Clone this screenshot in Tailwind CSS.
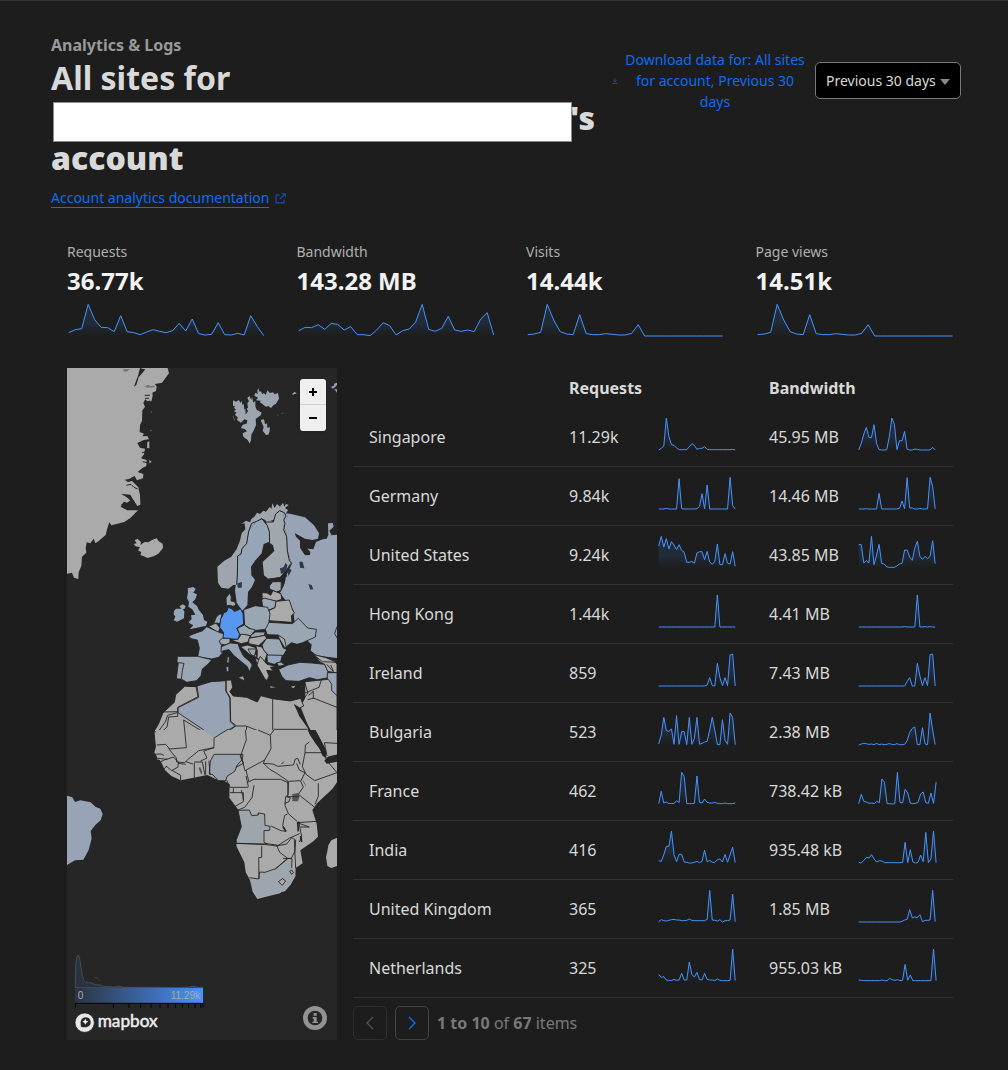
<!DOCTYPE html>
<html lang="en">
<head>
<meta charset="utf-8">
<title>Account analytics</title>
<script src="https://cdn.jsdelivr.net/npm/@tailwindcss/browser@4"></script>
</head>
<body class="bg-[#1d1d1d] text-[#d9d9d9] font-['Noto_Sans',sans-serif] w-[1008px] h-[1070px] overflow-hidden">
<main class="h-full border-t border-[#313131] px-[51px] pt-[34px]">

<header class="flex h-[196px]">
  <div class="w-[560px] shrink-0">
    <p class="text-base leading-[21px] font-bold text-[#999999]">Analytics &amp; Logs</p>
    <h1 class="mt-[2px] text-[32px] leading-10 font-bold">All sites for
      <span class="flex h-10 items-center font-black"><span class="mt-[7px] ml-[2px] block h-10 w-[519px] shrink-0 border border-[#8a8a8a] bg-white"></span><span class="-ml-[2px]">'s</span></span>
      <span class="block font-black">account</span>
    </h1>
    <a class="mt-[10px] flex items-center gap-[6px] text-sm leading-5 text-[#0f6bf2]"><span class="border-b border-[#0f6bf2] leading-[19px]">Account analytics documentation</span>
      <svg class="h-[11px] w-[11px]" viewBox="0 0 12 12" fill="none" stroke="#1353b5" stroke-width="1.2"><path d="M5 2.2H1.2v8.6h8.6V7M7.2.8h4v4M11 1 5.2 6.8"/></svg>
    </a>
  </div>
  <div class="flex w-[350px] shrink-0 pt-[14px]">
    <a class="flex h-[63px] w-[204px] items-center text-center text-sm leading-[21px] text-[#0f6bf2]">
      <svg class="mr-[5px] ml-px h-[6px] w-[6px] shrink-0" viewBox="0 0 6 6" fill="none" stroke="#1353b5" stroke-width=".8"><path d="M3 0v4M1.2 2.3 3 4.1l1.8-1.8M.2 5.5h5.6"/></svg>
      <span class="w-[184px]">Download data for: All sites for account, Previous 30 days</span>
    </a>
    <button class="mt-[13px] flex h-[37px] w-[146px] items-center rounded-[5px] border border-[#797979] bg-black pl-[10px] text-sm whitespace-nowrap">Previous 30 days<svg class="mt-0.5 ml-1 h-[6px] w-[10px]" viewBox="0 0 10 6"><path d="M0 0h10L5 6z" fill="#888"/></svg></button>
  </div>
</header>

<section class="grid h-[137px] w-[918px] grid-cols-4 pt-[10px]">
  <div class="px-4"><p class="text-sm leading-[21px] text-[#b0b0b0]">Requests</p><p class="mt-[4px] text-2xl leading-[30px] font-bold text-[#f2f2f2]">36.77k</p><svg class="mt-[5px] h-10 w-[198px]" data-step="6.5" data-h="10,19,22,95,49,26,25,13,61,13,10,4,12,19,14,10,16,38,15,51,7,3,5,40,4,3,8,3,61,29,1"></svg></div>
  <div class="px-4"><p class="text-sm leading-[21px] text-[#b0b0b0]">Bandwidth</p><p class="mt-[4px] text-2xl leading-[30px] font-bold text-[#f2f2f2]">143.28 MB</p><svg class="mt-[5px] h-10 w-[198px]" data-step="6.5" data-h="16,26,25,34,20,38,35,18,28,4,4,1,18,40,31,3,16,21,42,95,20,14,23,59,18,14,18,13,51,70,3"></svg></div>
  <div class="px-4"><p class="text-sm leading-[21px] text-[#b0b0b0]">Visits</p><p class="mt-[4px] text-2xl leading-[30px] font-bold text-[#f2f2f2]">14.44k</p><svg class="mt-[5px] h-10 w-[198px]" data-step="6.5" data-h="4,6,11,95,48,13,6,4,64,7,4,4,7,5,3,3,8,34,0,0,0,0,0,0,0,0,0,0,0,0,0"></svg></div>
  <div class="px-4"><p class="text-sm leading-[21px] text-[#b0b0b0]">Page views</p><p class="mt-[4px] text-2xl leading-[30px] font-bold text-[#f2f2f2]">14.51k</p><svg class="mt-[5px] h-10 w-[198px]" data-step="6.5" data-h="4,6,11,95,48,13,6,4,64,7,4,4,7,5,3,3,8,34,0,0,0,0,0,0,0,0,0,0,0,0,0"></svg></div>
</section>

<section class="flex gap-4 pl-4">
<div class="relative h-[672px] w-[270px] shrink-0 overflow-hidden bg-[#262626]">
<svg class="block h-[672px] w-[270px]" viewBox="0 0 810 2016" stroke-linejoin="round">
  <!-- Arctic and Scandinavia -->
  <g transform="translate(-21 -24)">
    <path fill="#aaa" d="M21 24H323L327 40 316 55 306 68 285 72 290 80 288 93 277 98 278 107 275 121 262 124 256 118 250 128 255 141 247 151 246 182 240 196 239 216 252 221 247 229 262 228 267 238 251 240 232 249 240 263 255 266 252 283 243 295 260 300 259 318 247 324 233 336 250 342 249 355 231 361 224 348 207 357 194 359 204 366 216 363 235 382 240 406 241 434 232 438 217 415 211 404 183 401 199 411 211 421 202 428 191 425 182 440 202 451 234 451 211 474 193 486 154 496 148 487 142 505 137 525 116 543 106 550 101 536 91 550 80 547 77 565 79 578 66 590 64 618 56 637 55 657 42 653 36 638 21 641z"/>
    <path fill="#262626" d="M240 24 250 27 256 28 249 37 236 52 229 75 222 80 228 63 234 48z"/>
    <path fill="#777" d="M190 27h20l-11 8-8-1zM252 80l13-6 6 4 15-1-3 5-19 1z"/>
    <g fill="none" stroke="#262626" stroke-width="3"><path d="M254 106h16M255 115h12M246 165l12-5M240 210l17-5 8 4M246 277l14 0M248 305l15 3M199 376l14-3 9 9 11 5M184 434l13-3 7 10M205 439l23-6"/></g>
    <path fill="#aaa" d="m269 121 6-1-2 5zM272 155l3-1-1 4zM272 209l3 1-3 5zM262 246l6-2 0 21-7-1zM268 299l7 7-7 4z"/>
    <path fill="#aaa" d="M221 552 230 550 224 540 233 537 243 546 241 555 254 546 265 547 276 540 290 535 296 544 308 551 309 564 295 581 281 589 262 594 250 588 241 585 244 577 234 571 240 562 227 559z"/>
    <path fill="#9da5af" d="M519 121 528 125 537 120 541 129 545 122 547 136 551 131 553 149 556 146 557 164 564 153 560 146 564 143 562 130 567 124 562 114 568 108 574 120 576 110 580 128 586 122 586 139 590 149 605 158 602 166 594 172 587 177 588 196 580 214 574 224 573 240 569 251 563 240 558 236 550 230 548 220 561 214 554 207 543 204 548 194 560 191 562 181 553 178 543 188 531 180 533 172 525 165 529 157 521 154 528 149 522 143 525 139 519 137zM583 107 586 98 593 102 592 92 595 85 599 96 603 94 607 103 611 99 617 104 623 91 629 99 640 97 643 103 654 99 657 116 648 131 640 136 633 144 625 138 618 140 610 134 600 127 602 122 588 121 594 113zM602 180 612 178 615 193 621 190 622 203 630 202 629 214 625 224 618 225 608 212 611 201z"/>
    <path fill="#aaa" d="m696 102 8-6 6 4-12 4z"/><path fill="#98a4b5" d="m813 80 9-3 0-6 9-3v7l-8 8-5 3zM823 88l8 0v10z"/>
    <path fill="none" d="M519 168l5 14M651 165h4M665 160h5" stroke="#777" stroke-width="2"/>
    <!-- Norway -->
    <path fill="#9ea5ad" d="M686 435 675 444 684 450 674 468 661 452 650 460 645 478 628 484 606 476 590 484 575 500 566 514 560 550 546 566 543 582 533 588 532 645 530 674 520 675 505 686 484 683 474 668 472 620 493 602 514 590 530 567 540 542 545 520 556 508 554 490 544 492 558 482 570 487 574 477 583 470 591 458 600 462 610 452 618 455 630 440 634 448 637 430 644 444 651 432 660 440 669 428 673 440 678 432z"/>
    <!-- Sweden -->
    <path fill="#96a5b8" d="M606 476 622 497 628 515 628 545 611 552 605 580 585 602 573 620 574 646 585 659 576 680 564 696 562 736 547 752 530 728 525 690 532 645 533 588 543 582 546 566 560 550 566 514 575 500 590 484z"/>
    <!-- Finland -->
    <path fill="#a0a7ad" d="M614 475 640 485 645 464 656 452 670 456 673 480 671 500 680 520 681 566 689 590 694 606 678 630 660 651 625 657 612 646 608 606 625 590 643 573 639 556 629 548 628 515 622 497z"/>
    <!-- Russia -->
    <path fill="#98a4b5" d="M670 460 690 461 735 472 762 496 777 520 774 536 757 540 735 536 704 519 708 530 720 542 720 563 735 586 750 585 751 575 742 566 760 568 768 546 788 538 800 536 805 525 804 490 818 489 821 500 808 512 815 526 831 524V890L800 882 750 850 705 800 700 750 660 700 672 680 678 650 694 606 689 590 681 566 680 520 671 500z"/>
    <path fill="#262626" d="m615 657 45-5 18-9 4 6-22 12-32 6-10 16-4-12z"/>
    <g fill="#2d3a4d"><path d="m660 625 10-3 7-13 5 6-4 21-15 6zM681 631l10-4 16 15-3 14-16 0zM718 605l10 0 9 35-9 2-7-12zM745 672l10 5 5 13-10 0zM532 670l14-4-1 17-12 0z"/></g>
    <g fill="none" stroke="#222" stroke-width="3"><path d="M530 674 532 645 533 588 543 582 546 566 560 550 566 514 575 490 590 484 606 476 622 497 628 515 629 548M606 476l10 10 24 0 7-24 12-10 14 6 5 10-7 12 4 10-4 20 9 20 2 42 6 30 7 8-11 23-21 20"/></g>
  </g>

  <!-- Europe and North Africa -->
  <g transform="translate(-21 576)" stroke="#222" stroke-width="2.6">
    <path fill="#98a4b5" stroke="none" d="M660 100 700 20 831 40V294L800 290 770 286 752 272 756 248 768 214 705 150 700 125z"/>
    <path stroke="none" fill="#2d3a4d" d="m745 72 10 3 5 13-9 1z"/>
    <path stroke="none" fill="#96a5b8" d="m358 139 10-6 9 5-3 8-7 3zM342 153l6-7 17 0 8 7-1 22-21 10-10-4 5-11-5-8zM383 85l17-4 7 6-7 11 11 5-5 15-9 9 14 11 5 11 13 16 3 15 10 5-4 12-20 5-29 6 11-12-9-5-5-5 9-9-2-11 13-2-9-16-12-8 2-13-6-13 3-19z"/>
    <!-- Denmark and Baltic states -->
    <path fill="#9ea5ad" d="m498 113 12-14 4 12-1 12 11 2 4 11-10 3-7-3-12 1z"/>
    <path fill="#9ea5ad" d="m628 78 10-13 26 0-1 26-14 5-20-9z"/><path fill="#aaa" d="m606 98 16 1 10 7 7-14 24 9 2 17-17 6-36-8-5 7z"/>
    <path fill="#9aa6b1" d="m605 120 7-6 36 9-3 20-24 9-13-13z"/>
    <path fill="#aaa" d="m648 124 40-4 10 31 6 8-10 8 2 20-70-5 0-30 19-9z"/>
    <path fill="#9aa6b1" d="m551 149 35-12 37 5 7 20-3 22 0 23-47 5-26-17z"/>
    <path fill="#96a5b8" d="m469 171 9-8 8-1-4 18-1 11-12-2-9 5z"/><path fill="#a0a7ad" d="m446 199 22-10 12 15-5 14z"/>
    <path fill="#96a5b8" d="M386 228 400 222 428 212 440 200 475 216 492 222 489 242 484 259 488 278 476 292 455 297 413 290 418 265 412 240 393 236z"/>
    <path fill="#9aa6b1" d="m352 289 60 0 43 10-8 11-20 17-4 20-13 15-30 5-13-8-14-4-3-10 8-28-7-13z"/>
    <path fill="#9ea5ad" d="m355 308 17 2-5 22-3 26-15-2z"/>
    <!-- Central Europe, the Balkans and the Black Sea coast -->
    <path fill="#5797f0" d="M492 158 500 155 505 142 518 148 522 154 533 151 541 146 549 160 551 192 530 205 539 222 534 238 507 236 489 234 491 218 479 202 482 178z"/>
    <path fill="#9aa6b1" d="m532 205 21-10 14 10 19 5-14 17-33-4z"/>
    <path fill="#a0a7ad" d="m478 242 10-7 22 0 0 14-15 6-14-3z"/><path fill="#aaa" d="m512 240 22-2 10-16 27 5-7 19-20 5z"/>
    <path fill="#9ea5ad" d="m572 226 15-10 29 0-4 11-39 6z"/><path fill="#aaa" d="m567 235 48-9 5 9-24 22-30-6z"/>
    <path fill="#98a4b5" d="m484 260 27-11 23 2 5 15 12 23 19 16 7 10-9 21-6-16-18-15-23-19-14-17-17 3-7 5z"/>
    <path fill="#98a4b5" d="m533 353 17-6 5 16zM498 320l8-1 1 16-8 0zM502 290l6 0-1 19-7 0z"/>
    <path fill="#aaa" d="m541 260 22-5 25 8-3 16 7 14-24-10-13-12z"/>
    <path fill="#9aa6b1" d="m564 267 25 0-6 21-10-4z"/><path fill="#aaa" d="m587 257 19 4 15 22-7 22-23-8 1-24zM587 294l18 5-3 16-14-10z"/>
    <path fill="#aaa" d="m595 302 6-13 20 24 28 6-18 3 9 11-20-2 7 16-6 15-8-8-13-23-9-16z"/>
    <path fill="#9aa6b1" d="m606 255 14-20 38 2 12 27 11 5-11 18-45-1-14-16z"/>
    <path fill="#94a6bd" d="m621 285 46 1-5 20-20 7-20-6z"/><path fill="#aaa" d="m654 229 16-4 13 33-9 5-10-17z"/>
    <path fill="#9aa6b1" d="m616 208 11-21 70 4 18-16 28 29 26 4-3 23-38 17-17 5-17-5-15 12-6-23-19-12-33-1z"/>
    <path fill="#262626" stroke="none" d="m666 292 15-26 12-18 14 5-1 15 20 3 20-7 14 20 24 22-18 8-34 2-43-3-14 4-13-5z"/>
    <path fill="#98a4b5" d="M656 328l28-13 36-8 35 2 39 4 10 20 0 20-31 6-25-6-31 11-39-2-13-13z"/>
    <path fill="#96a5b8" d="m650 308 13-2 12 9-19 4z"/>
    <path fill="#aaa" d="m763 284 35 9 25 11 8 8v27l-28-5-9-21-14-7z"/><path fill="#98a4b5" d="m802 338 29 0v70l-17-10-12-25z"/>
    <g fill="none"><path d="m767 289 20 16 44 2M800 313l23 25M812 315l8 18M831 200l-7 20 7 14"/></g>
    <!-- Maghreb, Egypt and the Levant -->
    <path fill="#aaa" d="m735 365 70-7 10 15 0 19 16 15V600H770L760 540 720 440 734 415z"/>
    <path fill="#aaa" d="M347 404 375 378 411 380 496 361 514 360 518 382 510 395 520 408 560 412 592 426 602 407 637 416 690 423 722 415 731 438 719 444 703 434 722 462 747 505 765 550 780 600H290L282 514 295 493 309 458 343 427z"/>
    <path fill="#aaa" stroke="none" d="m630 379 18 3-16 1zM692 380l14-3-5 8z"/>
    <path fill="#98a4b5" d="m411 378 42-13 45-3 0 32 12 21 1 70 14 14-61 33-110-74 0-15 62-31z"/>
    <path fill="#262626" stroke="none" d="m703 434 10 10 9 16 13 21 23 40 11 10 8 20-22-5-12-42-25-35z"/>
    <g fill="none"><path d="m375 378 33 2 6 30-61 32v27l-27 2-5 30-15 14h-24M296 513l20-27 7-20 28-8M309 456l44-1M371 480l6 60M371 480l98 60M498 362v30l12 20 2 72 18 14 28 0 73 29M528 497l-26 20M560 500l-4 45M638 417v121M641 508h102M631 528v20M510 395l12 14M733 364l11 35-15 20M732 400l45-18 8-25M760 394l0 20 71 28M760 394l-14 12M743 419l20-5"/></g>
  </g>

  <!-- Sub-Saharan Africa and Brazil -->
  <g transform="translate(-21 1086)" stroke="#222" stroke-width="2.6">
    <path fill="#98a4b5" stroke="none" d="M21 197 37 202 45 216 61 211 92 217 107 231 121 236 128 252 122 271 106 285 92 303 95 325 86 360 70 389 45 391 21 405z"/>
    <path fill="#aaa" stroke="none" d="M287 0H742L748 13 773 39 793 72 799 100 831 92V157L817 177 771 220 757 240 770 281 774 320 760 334 721 361 728 400 707 414 706 436 683 470 660 490 630 497 592 507 578 485 570 450 557 427 553 397 530 350 528 337 545 290 538 244 508 203 509 163 490 151 468 148 442 135 362 151 334 138 314 119 303 95 283 68 290 42z"/>
    <path fill="#262626" stroke="none" d="m745 0 22 0 35 67-10 12-7-14-21-28z"/><path fill="#262626" stroke="none" d="m793 92 13-15 25-6v24l-31 6z"/>
    <path fill="#aaa" stroke="none" d="m767 0 66 0v73l-32 7-8-42z"/><path fill="none" d="m831 40-38-2 8 40"/>
    <path fill="#262626" stroke="none" d="m743 0 15 0 20 32 16 32 6 20-12-6-12-28-22-28z"/>
    <path fill="#98a4b5" stroke="none" d="m428 0h70l-36 24z"/>
    <path fill="#9aa3ad" d="m462 73 87 0-2 15-15 17-8 19-23 15-4 13-22 0-17-18-10-2 3-39z"/>
    <path fill="#9da5ad" d="m534 241 34-1 7 17 20-2-1-6 20 3 1 34 15 3-1 12-17 1 0 35 9 5-92-2 0-11 15-39z"/>
    <path fill="#9da5ad" stroke="none" d="m568 443 28 4 3-21 16 1 32-11 37-31 12 1-1 28 12 23-15 27-17 20-31 7-50 14-12-22z"/>
    <path fill="none" d="m568 443 28 4 3-21 16 1 32-11 37-31 12 1-1 28"/>
    <path fill="#aaa" d="m655 455 13-9 9 7-10 13zM689 424l6-4 5 8-5 5z"/>
    <path fill="#aaa" stroke="none" d="m831 323-17 8-9 15-3 18-4 18 4 26 12 6 17-6z"/>
    <path fill="#555" stroke="none" d="m697 192 17-3 5 8-5 17-17 0z"/>
    <g fill="none"><path d="m374 0 5 53-50 4-12-14-27 2M462 24v29l-46 9-32 26-10 10-24-2-1-12-23-28M462 24l42-26M462 53l-31 10 10 21-20 10M556 0l3 29-18 51 10 19-24 14M594 0l37 16 2 40-19 34-59 32-13-47M558 120l8 33M562 157l20-9 79 0 24 10M642 0l-11 15M614 90l-4 10 29 2 14 7 47-4 6-18 7-2 8 18M611 100l18 18 18 10 38 26 36-2M710 100l8 20 17 8-14 28M735 68l52 0M735 68l-8 42 12 24 25 18 67-24M775 160v39l-10 24M735 68l1-23 12-9M787 68l17 28 27 32M723 156l7 15-15 22 48 38M683 155l1 40-7 5-2 26 10 25 26 23M680 200l36 0M711 278l60-4M711 278l37 13-27 0M716 274l9 46-7 16M683 252l-9 4-6 31 10 17-15-2-30-14M615 340l40 6 34-22 30-13M528 340l92 4 30 4 30-6 15-19 12 7-2 33-11 22-25 1M605 347v35l-9 1 1 64M650 346l9 21 24 18-37 32M508 172h57M510 188h40v27l-26 15M520 175v13M544 180l7 30M582 166l-6 37-22 29-20 8M500 150l9 20M565 170l-7-32"/><path d="m283 73 20-1 9 4M285 84l36 4 18-7 16 14-1 16-19 11-17-14M336 121l26 15 0 14M354 100l23 3M377 95l22 7M403 98l0 45M403 96l24 0 8 40M437 94l0 40M447 92l3 43M320 108l-10 12M302 95l20-9M679 200l12 3-5 13-13 4M686 156l-2 40M665 102l6-7M703 330l4 85"/></g>
    <path d="m416 113 5-1 6 14-3 8-6-14z" fill="#555" stroke="none"/>
    <path d="m728 150 9 17" stroke="#666"/><path d="m713 276 2 28M669 290l9 14M722 318l3 18" fill="none" stroke-width="5"/>
  </g>

  <!-- Distribution curve, scale and wordmark -->
  <defs><linearGradient id="scale"><stop stop-color="#2b3441"/><stop offset="1" stop-color="#4992fd"/></linearGradient></defs>
  <g transform="translate(-21 1716)">
    <path fill="#29323f" stroke="#555d68" stroke-width="2" d="M46 143V105C47 80 49 45 54 45c6 0 8 42 15 68 4 14 7 15 18 15s13 5 22 6 15-1 21 6h15c6-3 8-1 12 1 10 1 15-5 24-2l10 3H375c14 0 16-5 30-2l14 3 9-2v3z"/>
    <path d="M105 113q8-4 14 10" fill="none" stroke="#555" stroke-width="2"/>
    <path fill="url(#scale)" d="M45 144h384v45H45z"/>
    <path fill="none" stroke="#050505" stroke-width="3" d="M46 203v-13h383v13M160 190v14M207 190v14M242 190v14M273 190v14M300 190v14M324 190v14M347 190v14M367 190v14M386 190v14M405 190v14M422 190v14"/>
    <g font-family="Liberation Sans, Arial, sans-serif" font-size="30" fill="#aaa"><text x="53" y="177">0</text><text x="420" y="177" text-anchor="end">11.29k</text></g>
    <circle cx="74" cy="248" r="29" fill="#e8e8e8" stroke="#191919" stroke-width="2"/>
    <path d="M63 260c-2-10-2-20 5-25 7-6 17-4 21 2 5 7 4 17-2 21-7 5-16 4-24 2z" fill="#262626"/><path d="m76 236 3 6 6 3-6 3-3 6-3-6-6-3 6-3z" fill="#eee"/>
    <text x="113" y="260" textLength="180" lengthAdjust="spacingAndGlyphs" font-family="Lato, sans-serif" font-weight="400" font-size="49" fill="#eee" stroke="#eee" stroke-width="1.4">mapbox</text>
    <circle cx="765" cy="234" r="29" fill="#262626" stroke="#929292" stroke-width="14"/><path d="M761 219h9v8h-9zM758 231h12v14h4v4h-17v-4h4v-9h-3z" fill="#929292"/>
  </g>
</svg>
<div class="absolute top-[11px] right-[11px] flex h-[52px] w-[26px] flex-col rounded-[3px] bg-[#efefef] shadow">
  <button class="flex h-[26px] items-center justify-center border-b border-[#d0d0d0]"><svg class="h-2 w-2" viewBox="0 0 8 8" stroke="#000" stroke-width="2"><path d="M4 0v8M0 4h8"/></svg></button>
  <button class="flex h-[26px] items-center justify-center"><svg class="h-2 w-2" viewBox="0 0 8 8" stroke="#000" stroke-width="2"><path d="M0 4h8"/></svg></button>
</div>
</div>

<div class="w-[600px] shrink-0">
  <div class="grid h-10 grid-cols-3 items-center font-bold"><span></span><span class="pl-4">Requests</span><span class="pl-4">Bandwidth</span></div>
  <div id="rows"></div>
  <div class="mt-[8px] flex items-center">
    <button class="flex h-[34px] w-[34px] items-center justify-center rounded-[5px] border border-[#303030]"><svg class="h-[14px] w-2" viewBox="0 0 8 14" fill="none" stroke="#555" stroke-width="1.2"><path d="M7 1 1 7l6 6"/></svg></button>
    <button class="ml-2 flex h-[34px] w-[34px] items-center justify-center rounded-[5px] border border-[#434343]"><svg class="h-[14px] w-2" viewBox="0 0 8 14" fill="none" stroke="#0f6bf2" stroke-width="1.4"><path d="m1 1 6 6-6 6"/></svg></button>
    <p class="ml-2 text-[#797979]"><b class="font-bold">1 to 10</b> of <b class="font-bold">67</b> items</p>
  </div>
</div>
</section>
</main>

<svg class="absolute h-0 w-0"><defs><linearGradient id="fade" x2="0" y2="1"><stop stop-color="#4693ff" stop-opacity=".14"/><stop offset=".6" stop-color="#4693ff" stop-opacity=".12"/><stop offset="1" stop-color="#4693ff" stop-opacity="0"/></linearGradient></defs></svg>
<script>
const z = n => Array(n).fill(0).join(',');
const rows = [
 ['Singapore','11.29k','0,5,12,96,40,16,14,6,1,1,1,1,10,19,14,2,5,5,10,2,1,1,1,1,1,1,1,1,1,2,0','45.95 MB','0,20,48,68,38,37,76,20,1,0,0,1,40,96,77,1,28,28,56,2,0,0,3,2,0,0,0,0,0,8,0'],
 ['Germany','9.84k','0,0,0,2,0,0,0,0,91,1,0,0,0,0,0,1,8,46,0,72,0,0,0,0,0,0,0,0,95,10,0','14.46 MB','0,0,0,1,0,0,0,0,47,0,0,0,0,0,0,0,2,24,1,94,3,3,0,0,2,0,0,1,95,68,0'],
 ['United States','9.24k','66,95,63,88,57,79,69,55,70,53,47,17,17,20,14,45,49,49,25,50,18,11,20,72,10,10,43,14,12,49,5','43.85 MB','70,70,15,22,15,95,10,39,71,14,12,3,2,2,2,6,12,14,54,54,33,23,60,80,35,26,35,28,35,82,13'],
 ['Hong Kong','1.44k',z(23)+',96,'+z(7),'4.41 MB',z(18)+',1,0,0,0,0,96,0,0,1,0,1,0,0'],
 ['Ireland','859',z(19)+',3,25,1,0,68,25,1,25,1,93,96,0','7.43 MB',z(19)+',14,25,0,0,68,30,1,25,1,94,96,0'],
 ['Bulgaria','523','3,30,83,43,41,48,2,88,2,40,40,1,83,2,20,83,2,5,9,11,45,83,45,1,1,76,14,2,96,83,1','2.38 MB','0,3,5,4,2,3,1,5,1,3,1,2,4,2,1,4,1,1,2,13,38,50,54,1,1,52,3,1,96,45,1'],
 ['France','462','1,38,3,6,1,2,1,10,4,95,83,1,1,1,2,84,5,3,15,5,3,3,5,2,1,1,3,1,1,1,3','738.42 kB','1,29,8,6,2,3,1,8,4,75,65,1,1,0,1,95,5,3,44,33,3,1,2,5,30,36,4,2,33,2,65'],
 ['India','416','7,5,25,50,50,96,25,4,26,26,3,2,0,0,2,5,1,5,39,3,8,2,2,10,12,3,26,2,25,47,1','935.48 kB','2,0,8,17,15,25,12,3,7,6,1,1,1,1,1,1,1,1,62,1,40,3,0,2,24,4,92,1,12,96,1'],
 ['United Kingdom','365','1,7,4,3,5,7,8,6,6,4,4,5,9,5,4,4,4,4,4,8,95,6,5,3,7,0,4,4,6,84,1','1.85 MB',z(17)+',2,6,8,37,13,15,13,22,1,5,5,6,95,1'],
 ['Netherlands','325','20,11,13,3,2,1,5,2,3,23,3,3,57,20,12,26,4,3,23,5,3,3,1,6,2,1,1,1,2,96,1','955.03 kB','3,2,1,1,1,1,1,1,1,3,1,1,8,4,2,4,1,2,50,2,18,1,1,1,1,1,1,1,1,96,1']
];
const cell = (value, h, kb) => `<div class="flex items-center justify-between pr-4 pl-4"><span>${value}</span><svg class="-mt-[6px] h-9 w-[79px] shrink-0" data-step="${kb ? 2.58 : 2.55}" data-h="${h}"></svg></div>`;
document.getElementById('rows').innerHTML = rows.map(r => `<div class="grid h-[59px] grid-cols-3 items-center border-b border-[#313131]"><span class="pl-4">${r[0]}</span>${cell(r[1], r[2])}${cell(r[3], r[4], r[3].endsWith('kB'))}</div>`).join('');
document.querySelectorAll('svg[data-h]').forEach(s => {
  const wide = +s.dataset.step > 5, step = +s.dataset.step, base = wide ? 35 : 34, x0 = wide ? 1.7 : 0.7;
  const pts = s.dataset.h.split(',').map((h, i) => `${(x0 + i * step).toFixed(2)},${(base - h / 3).toFixed(2)}`);
  const last = (x0 + 30 * step).toFixed(2);
  s.innerHTML = `<polygon points="${x0},${base} ${pts.join(' ')} ${last},${base}" fill="url(#fade)"/><polyline points="${pts.join(' ')}" fill="none" stroke="#4693ff" stroke-width="1"/>`;
});
</script>
</body>
</html>
